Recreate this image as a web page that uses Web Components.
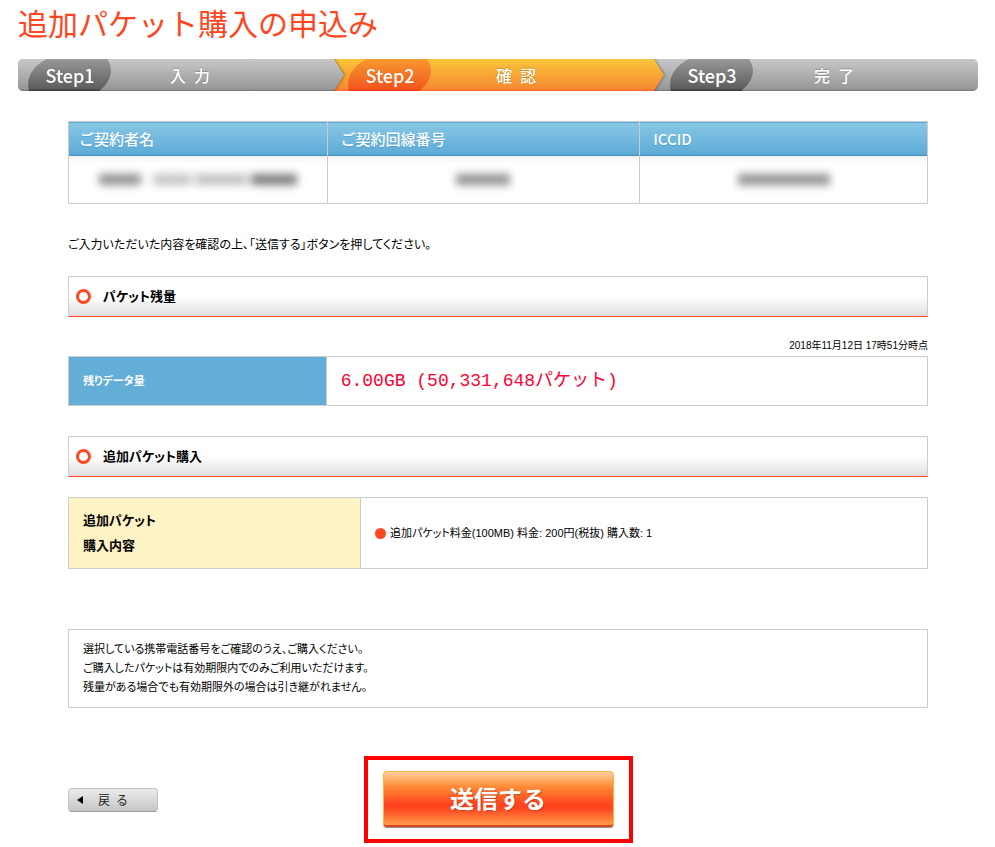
<!DOCTYPE html>
<html lang="ja">
<head>
<meta charset="utf-8">
<meta name="viewport" content="width=device-width, initial-scale=1">
<title>追加パケット購入の申込み</title>
<style>
  :root {
    --accent: #ff4621;
    --line: #ccc;
    --blue: #62aed7;
  }
  body {
    margin: 0;
    padding: 2px 17px 4px 18px;
    background: #fff;
    color: #000;
    font: 11px/19px "Liberation Sans Narrow", "Liberation Sans", "Noto Sans CJK JP", sans-serif;
    font-feature-settings: "palt";
  }
  h1 {
    margin: 0 0 17px;
    color: var(--accent);
    font: 400 30px/40px "Noto Sans CJK JP", sans-serif;
    font-feature-settings: normal;
  }
  main { padding: 30px 50px 0; }
  .lead { margin: 31px 0 21px; font-size: 12px; line-height: 20px; }
  .time { margin: 19px 0 1px; text-align: right; font-size: 10px; }
  .mt { margin-top: 30px; }
</style>
</head>
<body>
<h1>追加パケット購入の申込み</h1>
<step-bar>
  <step-item name="Step1">入&ensp;力</step-item>
  <step-item name="Step2" current>確&ensp;認</step-item>
  <step-item name="Step3">完&ensp;了</step-item>
</step-bar>
<main>
  <contract-table></contract-table>
  <p class="lead">ご入力いただいた内容を確認の上、「送信する」ボタンを押してください。</p>

  <section-heading>パケット残量</section-heading>
  <p class="time">2018年11月12日 17時51分時点</p>
  <info-row>
    <span slot="label">残りデータ量</span>
    6.00GB (50,331,648パケット)
  </info-row>

  <section-heading class="mt">追加パケット購入</section-heading>
  <info-row kind="order">
    <span slot="label">追加パケット<br>購入内容</span>
    追加パケット料金(100MB) 料金: 200円(税抜) 購入数: 1
  </info-row>

  <notice-box>
    選択している携帯電話番号をご確認のうえ、ご購入ください。<br>
    ご購入したパケットは有効期限内でのみご利用いただけます。<br>
    残量がある場合でも有効期限外の場合は引き継がれません。
  </notice-box>

  <form-actions></form-actions>
</main>

<script>
class StepBar extends HTMLElement {
  constructor() {
    super();
    this.attachShadow({ mode: 'open' });
    this.shadowRoot.innerHTML = `
      <style>
        :host {
          display: grid;
          grid-template-columns: repeat(3, 1fr);
          height: 32px;
          border-radius: 5px;
          overflow: hidden;
          background: linear-gradient(#c8c8c8, #989898 94%, #707070);
        }
      </style>
      <slot></slot>
    `;
  }
}
customElements.define('step-bar', StepBar);

class StepItem extends HTMLElement {
  constructor() {
    super();
    this.attachShadow({ mode: 'open' });
    this.render();
  }

  render() {
    const name = this.getAttribute('name');
    const current = this.hasAttribute('current');
    const stops = current ? ['#f8992f', '#f0581f', '#ff2d14'] : ['#989898', '#5e5e5e', '#333'];
    this.shadowRoot.innerHTML = `
      <style>
        :host {
          display: flex;
          position: relative;
          z-index: 1;
          filter: drop-shadow(1px 0 1px #0005);
          color: #fff;
          font: 500 16px/32px "Noto Sans CJK JP", sans-serif;
          font-feature-settings: normal;
        }
        :host([current]) { z-index: 0; }
        :host(:last-child) { z-index: auto; filter: none; }
        .body {
          display: flex;
          flex: 1;
          margin-right: -6px;
          padding-left: 10px;
          background: linear-gradient(#c8c8c8, #989898 94%, #707070);
          clip-path: polygon(0 0, calc(100% - 10px) 0, 100% 50%, calc(100% - 10px) 100%, 0 100%);
        }
        :host([current]) .body {
          margin-left: -6px;
          padding-left: 16px;
          background: linear-gradient(#fac63a, #f58a31 92%, #ff6426);
        }
        :host(:last-child) .body { margin-right: 0; padding-left: 12px; background: none; clip-path: none; }
        .badge { display: grid; flex: none; width: 84px; font-size: 18px; text-align: center; }
        .badge > * { grid-area: 1 / 1; }
        .badge span { z-index: 1; }
        .label { flex: 1; padding-right: 64px; text-align: center; text-shadow: 0 -1px 1px #0003; }
        :host(:first-child) .label { padding-right: 76px; }
      </style>
      <div class="body">
        <div class="badge">
          <svg width="84" height="32" viewBox="0 0 84 32" aria-hidden="true">
            <linearGradient id="g" x2="0" y2="1">
              <stop stop-color="${stops[0]}"/>
              <stop offset=".92" stop-color="${stops[1]}"/>
              <stop offset="1" stop-color="${stops[2]}"/>
            </linearGradient>
            <path fill="url(#g)" d="M1 32C-2 22 2 8 19 0H79C87 11 82 24 71 32Z"/>
          </svg>
          <span>${name}</span>
        </div>
        <div class="label"><slot></slot></div>
      </div>
    `;
  }
}
customElements.define('step-item', StepItem);

class ContractTable extends HTMLElement {
  constructor() {
    super();
    this.attachShadow({ mode: 'open' });
    this.render();
  }

  render() {
    const style = `
      :host { display: block; }
      table { width: 100%; border-collapse: collapse; table-layout: fixed; border: 1px solid var(--line); }
      col:nth-child(1) { width: 30.1%; }
      col:nth-child(2) { width: 36.4%; }
      th {
        height: 34px;
        padding: 0 10px;
        border-right: 1px solid var(--line);
        background: linear-gradient(#89c7e6, #5dabd6 95%, #3585b8 97%);
        color: #fff;
        font: 500 15px/34px "Noto Sans CJK JP", sans-serif;
        font-feature-settings: normal;
        text-align: left;
        text-shadow: 0 1px 1px #3585b866;
      }
      th:nth-child(n+2) { padding-left: 13px; }
      td {
        height: 47px;
        padding: 0;
        border-right: 1px solid var(--line);
        background: linear-gradient(#f2f2f2, #fff 8px);
      }
      .mask { display: flex; justify-content: center; gap: 4px; filter: blur(4px); }
      .mask i { height: 11px; background: #777; }
    `;
    // Personal data stays masked: only blurred bars are drawn
    const mask = (...bars) => `
      <div class="mask" role="img" aria-label="***">
        ${bars.map(([w, c]) => `<i style="width:${w}px;background:${c}"></i>`).join('')}
      </div>`;
    this.shadowRoot.innerHTML = `
      <style>${style}</style>
      <table>
        <colgroup><col><col><col></colgroup>
        <thead>
          <tr><th scope="col">ご契約者名</th><th scope="col">ご契約回線番号</th><th scope="col">ICCID</th></tr>
        </thead>
        <tbody>
          <tr>
            <td>${mask([42, '#909090'], [4, '#fff'], [38, '#c4c4c4'], [52, '#c0c0c0'], [46, '#7c7c7c'])}</td>
            <td>${mask([54, '#909090'])}</td>
            <td>${mask([92, '#909090'])}</td>
          </tr>
        </tbody>
      </table>
    `;
  }
}
customElements.define('contract-table', ContractTable);

class SectionHeading extends HTMLElement {
  constructor() {
    super();
    this.attachShadow({ mode: 'open' });
    this.shadowRoot.innerHTML = `
      <style>
        :host { display: block; }
        h2 {
          display: flex;
          align-items: center;
          gap: 12px;
          margin: 0;
          padding: 0 7px;
          border: 1px solid var(--line);
          border-bottom-color: var(--accent);
          background: linear-gradient(#fff 50%, #dedede);
          font-size: 13px;
          line-height: 39px;
        }
        i { box-sizing: border-box; width: 15px; height: 15px; border: 3px solid var(--accent); border-radius: 50%; background: #fff; }
      </style>
      <h2><i></i><slot></slot></h2>
    `;
  }
}
customElements.define('section-heading', SectionHeading);

class InfoRow extends HTMLElement {
  constructor() {
    super();
    this.attachShadow({ mode: 'open' });
    this.shadowRoot.innerHTML = `
      <style>
        :host { display: block; }
        :host([kind="order"]) { margin-top: 20px; }
        table { width: 100%; border-collapse: collapse; border: 1px solid var(--line); }
        th, td { height: 48px; padding: 0 14px; text-align: left; }
        th {
          box-sizing: border-box;
          width: 30%;
          border-right: 1px solid var(--line);
          background: var(--blue);
          color: #fff;
          font-size: 11px;
        }
        td {
          color: #f03;
          font: 18px/24px "Liberation Mono", "Noto Sans CJK JP", monospace;
          font-feature-settings: normal;
        }
        :host([kind="order"]) th {
          width: 34%;
          height: 71px;
          background: #fef3c5;
          color: #000;
          font-size: 13px;
          line-height: 25px;
        }
        :host([kind="order"]) td { color: #000; font: inherit; font-feature-settings: inherit; }
        div { display: flex; align-items: center; gap: 4px; }
        i { display: none; width: 11px; height: 11px; border-radius: 50%; background: var(--accent); }
        :host([kind="order"]) i { display: block; }
      </style>
      <table>
        <tr>
          <th scope="row"><slot name="label"></slot></th>
          <td><div><i></i><span><slot></slot></span></div></td>
        </tr>
      </table>
    `;
  }
}
customElements.define('info-row', InfoRow);

class NoticeBox extends HTMLElement {
  constructor() {
    super();
    this.attachShadow({ mode: 'open' });
    this.shadowRoot.innerHTML = `
      <style>
        :host { display: block; margin: 60px 0 48px; padding: 10px 14px; border: 1px solid var(--line); }
      </style>
      <slot></slot>
    `;
  }
}
customElements.define('notice-box', NoticeBox);

class FormActions extends HTMLElement {
  constructor() {
    super();
    this.attachShadow({ mode: 'open' });
    this.render();
  }

  render() {
    this.shadowRoot.innerHTML = `
      <style>
        :host { display: block; font-feature-settings: normal; }
        form { display: grid; grid-template-columns: 1fr auto 1fr; align-items: center; }
        button { font-family: "Noto Sans CJK JP", sans-serif; cursor: pointer; }
        .back {
          display: flex;
          align-items: center;
          gap: 15px;
          width: 90px;
          height: 24px;
          padding: 0 8px;
          border: 1px solid #c4c4c4;
          border-bottom-color: #999;
          border-radius: 4px;
          background: linear-gradient(#ececec, #c6c6c6);
          color: #222;
          font-size: 12px;
        }
        .frame { padding: 11px 15px 12px; border: 4px solid #f00; }
        .send {
          display: block;
          width: 231px;
          height: 56px;
          padding: 0 0 2px;
          border: 1px solid #fbb54b;
          border-bottom: 2px solid #d9441f;
          border-radius: 4px;
          background: linear-gradient(#ffcf9e, #ff8a35 28%, #ff4520 60%, #ff4520 68%, #ff9a48);
          box-shadow: 0 1px 1px #888;
          color: #fff;
          font-size: 24px;
          font-weight: 700;
          text-shadow: 1px 1px 1px #b3301299;
        }
      </style>
      <form>
        <div>
          <button class="back" type="button">
            <svg width="6" height="8" viewBox="0 0 6 8" aria-hidden="true"><path d="M6 0v8L0 4z"/></svg>
            <span>戻&ensp;る</span>
          </button>
        </div>
        <div class="frame"><button class="send" type="submit">送信する</button></div>
      </form>
    `;
    this.shadowRoot.querySelector('form').addEventListener('submit', (e) => e.preventDefault());
  }
}
customElements.define('form-actions', FormActions);
</script>
</body>
</html>
